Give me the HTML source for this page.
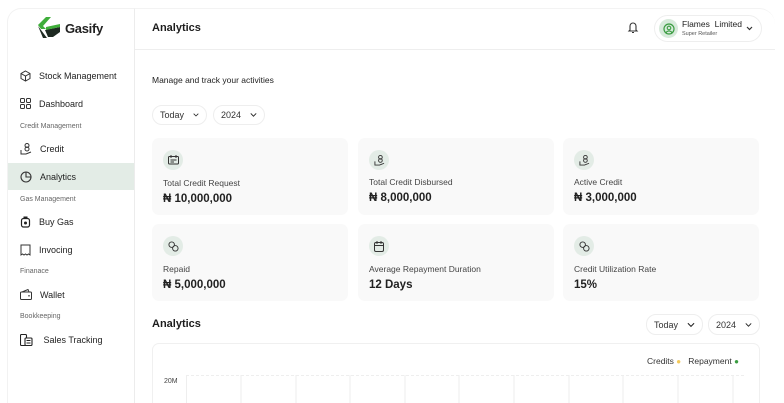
<!DOCTYPE html>
<html><head><meta charset="utf-8"><style>
*{box-sizing:border-box;margin:0;padding:0}
html,body{width:784px;height:403px;overflow:hidden}
body{background:#fff;font-family:"Liberation Sans",sans-serif;color:#1d1d1d;position:relative}
.a{position:absolute}
.side{left:7px;top:8px;width:128px;height:395px;border-right:1px solid #ececec;border-left:1px solid #f2f2f2;border-top:1px solid #f2f2f2;border-radius:14px 0 0 0}
.hdr{left:135px;top:8px;width:640px;height:42px;border-bottom:1px solid #eee;border-top:1px solid #f3f3f3;border-radius:0 16px 0 0}
.nav{position:absolute;left:20px;font-size:9px;color:#222;display:flex;align-items:center;gap:8px}
.sec{position:absolute;left:20px;font-size:7px;color:#666}
.card{position:absolute;width:196px;height:77px;background:#f9f9f9;border-radius:7px}
.ic{position:absolute;left:11px;top:12px;width:20px;height:20px;border-radius:50%;background:#e3ece6;display:flex;align-items:center;justify-content:center}
.lbl{position:absolute;left:11px;top:40px;font-size:8.5px;color:#444}
.val{position:absolute;left:11px;top:55px;font-size:11.5px;font-weight:bold;color:#222}
.pill{position:absolute;height:20px;border:1px solid #eee;border-radius:10px;font-size:9px;display:flex;align-items:center;gap:9px;padding:0 7px;color:#333}
svg{display:block}
</style></head><body>
<div class="a side"></div>
<div class="a hdr"></div>
<svg class="a" style="left:38px;top:17px" width="22" height="22" viewBox="0 0 22 22"><polygon points="8,0 13,0 5,9 8,12 3,12 0,8" fill="#3fae3a"/><polygon points="0,9 3,13 9,21 5,21" fill="#1e2a22"/><polygon points="7,13 22,10 22,15 15,20 10,20" fill="#1e2a22"/><polygon points="8,10 22,7 22,10 8,13" fill="#3fae3a"/></svg>
<div class="a" style="left:65px;top:21px;font-size:13px;font-weight:bold;color:#222;letter-spacing:-0.3px">Gasify</div>
<div class="a" style="left:152px;top:22px;font-size:11px;font-weight:bold">Analytics</div>
<svg class="a" style="left:627px;top:21px" width="12" height="13" viewBox="0 0 12 13"><path d="M3 9V5a3 3 0 0 1 6 0v4l1 1H2z M5 11.5h2" fill="none" stroke="#333" stroke-width="1.1"/></svg>
<div class="a" style="left:654px;top:15px;width:108px;height:27px;border:1px solid #eee;border-radius:14px"></div>
<div class="a" style="left:659px;top:19px;width:19px;height:19px;border-radius:50%;background:#d7eadb;display:flex;align-items:center;justify-content:center"><svg width="12" height="12" viewBox="0 0 12 12"><circle cx="6" cy="6" r="5" fill="none" stroke="#3a9c41" stroke-width="1.2"/><circle cx="6" cy="5" r="1.8" fill="none" stroke="#3a9c41" stroke-width="1.1"/><path d="M3 9.5c1.5-2 4.5-2 6 0" fill="none" stroke="#3a9c41" stroke-width="1.1"/></svg></div>
<div class="a" style="left:682px;top:19px;font-size:8.5px;color:#222">Flames&nbsp; Limited</div>
<div class="a" style="left:682px;top:31px;font-size:5.5px;color:#555">Super Retailer</div>
<svg class="a" style="left:746px;top:26px" width="7" height="5" viewBox="0 0 7 5"><path d="M1 1l2.5 2.5L6 1" fill="none" stroke="#333" stroke-width="1.2"/></svg>

<div class="nav" style="top:70px"><svg width="11" height="12" viewBox="0 0 11 12"><path d="M5.5 1L10 3.5v5L5.5 11 1 8.5v-5z M1 3.5l4.5 2.5L10 3.5 M5.5 6v5" fill="none" stroke="#333" stroke-width="1"/></svg>Stock Management</div>
<div class="nav" style="top:98px"><svg width="11" height="11" viewBox="0 0 11 11"><rect x="0.5" y="0.5" width="4" height="4" rx="1" fill="none" stroke="#333"/><rect x="6.5" y="0.5" width="4" height="4" rx="1" fill="none" stroke="#333"/><rect x="0.5" y="6.5" width="4" height="4" rx="1" fill="none" stroke="#333"/><rect x="6.5" y="6.5" width="4" height="4" rx="1" fill="none" stroke="#333"/></svg>Dashboard</div>
<div class="sec" style="top:123px">Credit Management</div>
<div class="nav" style="top:143px"><svg width="12" height="12" viewBox="0 0 12 12"><circle cx="7" cy="2.5" r="2" fill="none" stroke="#333"/><circle cx="7" cy="6" r="2" fill="none" stroke="#333"/><path d="M1 7v4h2l3 0 5-2" fill="none" stroke="#333"/></svg>Credit</div>
<div class="a" style="left:8px;top:163px;width:126px;height:27px;background:#e3ece6"></div>
<div class="nav" style="top:171px"><svg width="12" height="12" viewBox="0 0 12 12"><circle cx="6" cy="6" r="5" fill="none" stroke="#333" stroke-width="1.1"/><path d="M6 1v5h5" fill="none" stroke="#333" stroke-width="1.1"/></svg>Analytics</div>
<div class="sec" style="top:196px">Gas Management</div>
<div class="nav" style="top:216px"><svg width="11" height="12" viewBox="0 0 11 12"><rect x="1.5" y="2.5" width="8" height="8.5" rx="2" fill="none" stroke="#222" stroke-width="1.2"/><rect x="3.5" y="0.5" width="4" height="2" fill="#222"/><circle cx="5.5" cy="7" r="1.5" fill="#222"/></svg>Buy Gas</div>
<div class="nav" style="top:244px"><svg width="11" height="12" viewBox="0 0 11 12"><path d="M1 1h9v10l-1.5-1-1.5 1-1.5-1-1.5 1-1.5-1L1 11z" fill="none" stroke="#333"/></svg>Invocing</div>
<div class="sec" style="top:268px">Finanace</div>
<div class="nav" style="top:289px"><svg width="12" height="11" viewBox="0 0 12 11"><rect x="0.5" y="3" width="11" height="7.5" rx="1" fill="none" stroke="#333"/><path d="M2 3l6-2.5 1 2.5" fill="none" stroke="#333"/><circle cx="9" cy="6.8" r=".8" fill="#333"/></svg>Wallet</div>
<div class="sec" style="top:313px">Bookkeeping</div>
<div class="nav" style="top:334px"><svg width="13" height="12" viewBox="0 0 13 12"><rect x="0.5" y="0.5" width="6" height="11" rx="1" fill="none" stroke="#222" stroke-width="1.1"/><rect x="5" y="4" width="7" height="7.5" rx="1" fill="#fff" stroke="#222" stroke-width="1.1"/><path d="M6.5 6.5h4M6.5 9h4" stroke="#222"/></svg>&nbsp;Sales Tracking</div>

<div class="a" style="left:152px;top:75px;font-size:8.5px;color:#222">Manage and track your activities</div>
<div class="pill" style="left:152px;top:105px;width:55px">Today <svg width="9" height="6" viewBox="0 0 9 6"><path d="M1 1l3.5 3.5L8 1" fill="none" stroke="#222" stroke-width="1.2"/></svg></div>
<div class="pill" style="left:213px;top:105px;width:52px">2024 <svg width="9" height="6" viewBox="0 0 9 6"><path d="M1 1l3.5 3.5L8 1" fill="none" stroke="#222" stroke-width="1.2"/></svg></div>

<div class="card" style="left:152px;top:138px"><div class="ic"><svg width="11" height="10" viewBox="0 0 11 10"><rect x="0.5" y="1.5" width="10" height="7.5" rx="1" fill="none" stroke="#333"/><path d="M3 0v3M8 0v3M2.5 5h6M6 7H2.5" stroke="#333"/></svg></div><div class="lbl">Total Credit Request</div><div class="val">₦ 10,000,000</div></div>
<div class="card" style="left:358px;top:138px"><div class="ic"><svg width="11" height="11" viewBox="0 0 12 12"><circle cx="7" cy="2.5" r="2" fill="none" stroke="#333"/><circle cx="7" cy="6" r="2" fill="none" stroke="#333"/><path d="M1 7v4h5l5-2" fill="none" stroke="#333"/></svg></div><div class="lbl" style="top:39px">Total Credit Disbursed</div><div class="val" style="top:54px">₦ 8,000,000</div></div>
<div class="card" style="left:563px;top:138px"><div class="ic"><svg width="11" height="11" viewBox="0 0 12 12"><circle cx="7" cy="2.5" r="2" fill="none" stroke="#333"/><circle cx="7" cy="6" r="2" fill="none" stroke="#333"/><path d="M1 7v4h5l5-2" fill="none" stroke="#333"/></svg></div><div class="lbl" style="top:39px">Active Credit</div><div class="val" style="top:54px">₦ 3,000,000</div></div>
<div class="card" style="left:152px;top:224px"><div class="ic"><svg width="11" height="11" viewBox="0 0 12 12"><circle cx="4" cy="4" r="3" fill="none" stroke="#333"/><circle cx="8" cy="8" r="3" fill="none" stroke="#333"/></svg></div><div class="lbl">Repaid</div><div class="val">₦ 5,000,000</div></div>
<div class="card" style="left:358px;top:224px"><div class="ic"><svg width="10" height="11" viewBox="0 0 10 11"><rect x="0.5" y="1.5" width="9" height="9" rx="1.5" fill="none" stroke="#333"/><path d="M3 0v3M7 0v3M0.5 4.5h9" stroke="#333"/></svg></div><div class="lbl">Average Repayment Duration</div><div class="val">12 Days</div></div>
<div class="card" style="left:563px;top:224px"><div class="ic"><svg width="11" height="11" viewBox="0 0 12 12"><circle cx="4" cy="4" r="3" fill="none" stroke="#333"/><circle cx="8" cy="8" r="3" fill="none" stroke="#333"/></svg></div><div class="lbl">Credit Utilization Rate</div><div class="val">15%</div></div>

<div class="a" style="left:152px;top:318px;font-size:11px;font-weight:bold">Analytics</div>
<div class="pill" style="left:646px;top:314px;width:57px;height:21px">Today <svg width="9" height="6" viewBox="0 0 9 6"><path d="M1 1l3.5 3.5L8 1" fill="none" stroke="#222" stroke-width="1.2"/></svg></div>
<div class="pill" style="left:708px;top:314px;width:52px;height:21px">2024 <svg width="9" height="6" viewBox="0 0 9 6"><path d="M1 1l3.5 3.5L8 1" fill="none" stroke="#222" stroke-width="1.2"/></svg></div>
<div class="a" style="left:152px;top:343px;width:608px;height:60px;border:1px solid #f0f0f0;border-bottom:none;border-radius:7px 7px 0 0"></div>
<div class="a" style="left:647px;top:356px;font-size:8.5px;color:#333">Credits <span style="color:#f4c95a;font-size:8px">●</span>&nbsp;&nbsp; Repayment <span style="color:#3a9c41;font-size:8px">●</span></div>
<div class="a" style="left:164px;top:378px;font-size:7px;color:#444">20M</div>
<div class="a" style="left:186px;top:375px;width:558px;border-top:1px dashed #eee"></div>
<svg class="a" style="left:186px;top:375px" width="560" height="28"><g stroke="#eee"><line x1="0.5" y1="0" x2="0.5" y2="28"/><line x1="55" y1="0" x2="55" y2="28"/><line x1="110" y1="0" x2="110" y2="28"/><line x1="164" y1="0" x2="164" y2="28"/><line x1="219" y1="0" x2="219" y2="28"/><line x1="273" y1="0" x2="273" y2="28"/><line x1="328" y1="0" x2="328" y2="28"/><line x1="383" y1="0" x2="383" y2="28"/><line x1="437" y1="0" x2="437" y2="28"/><line x1="492" y1="0" x2="492" y2="28"/><line x1="547" y1="0" x2="547" y2="28"/></g></svg>
</body></html>
